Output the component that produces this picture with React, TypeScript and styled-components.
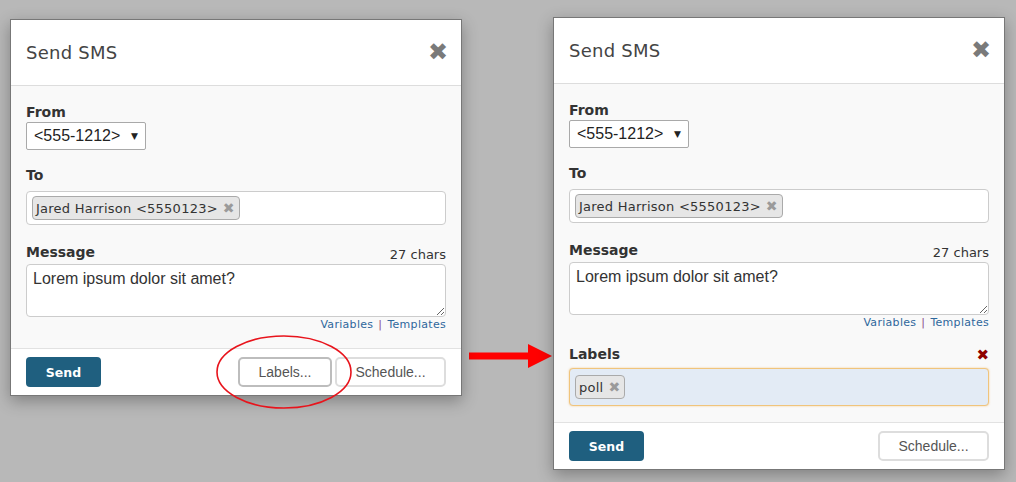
import React from "react";
import styled, { createGlobalStyle } from "styled-components";

const GlobalStyle = createGlobalStyle`
  html, body { margin: 0; padding: 0; }
  body {
    background: #b8b8b8;
    width: 1016px;
    height: 482px;
    overflow: hidden;
    font-family: "DejaVu Sans", Verdana, sans-serif;
  }
`;

const Stage = styled.div`
  display: flex;
  align-items: flex-start;
  padding-left: 10px;
  height: 482px;
  box-sizing: border-box;
`;

const Modal = styled.div<{ $top: number }>`
  position: relative;
  flex-shrink: 0;
  width: 452px;
  box-sizing: border-box;
  margin-top: ${(p) => p.$top}px;
  border: 1px solid #777;
  background: #fff;
  box-shadow: 0 5px 15px rgba(0, 0, 0, 0.3);
  display: flex;
  flex-direction: column;
`;

const Header = styled.div`
  height: 65px;
  display: flex;
  align-items: center;
  justify-content: space-between;
  padding: 0 15px;
  border-bottom: 1px solid #dddddd;
`;

const Title = styled.h4`
  margin: 0;
  font-size: 18px;
  font-weight: normal;
  line-height: 1.1;
  letter-spacing: 0.25px;
  color: #444;
`;

const Close = styled.span`
  font-size: 24px;
  color: #7a7a7a;
  line-height: 1;
  margin-top: -2px;
  margin-right: -2px;
`;

const Body = styled.div`
  background: #f9f9f9;
  padding: 16px 15px 16px;
  display: flex;
  flex-direction: column;
`;

const Section = styled.div<{ $gap: number }>`
  display: flex;
  flex-direction: column;
  margin-top: ${(p) => p.$gap}px;
`;

const LabelRow = styled.div`
  display: flex;
  justify-content: space-between;
  align-items: flex-end;
  height: 20px;
`;

const Label = styled.label`
  font-size: 14px;
  font-weight: bold;
  line-height: 20px;
  color: #333;
`;

const Count = styled.span`
  font-size: 13px;
  line-height: 15px;
  color: #333;
`;

const RemoveLabels = styled.span`
  font-size: 15px;
  color: #8f0000;
  line-height: 16px;
  margin-bottom: 1px;
  margin-right: 0;
`;

const Select = styled.div`
  width: 120px;
  height: 28px;
  box-sizing: border-box;
  border: 1px solid #a9a9a9;
  border-radius: 2px;
  background: #fff;
  display: flex;
  align-items: center;
  justify-content: space-between;
  padding: 0 7px;
  font-family: "Liberation Sans", Arial, sans-serif;
  font-size: 16px;
  color: #222;
`;

const SelectArrow = styled.span`
  font-size: 9px;
  color: #222;
  font-family: "DejaVu Sans", sans-serif;
`;

const TokenBox = styled.div<{ $focused?: boolean }>`
  margin-top: ${(p) => (p.$focused ? 4 : 6)}px;
  box-sizing: border-box;
  height: ${(p) => (p.$focused ? 38 : 34)}px;
  border: 1px solid ${(p) => (p.$focused ? "#f0c47c" : "#cccccc")};
  border-radius: 4px;
  background: ${(p) => (p.$focused ? "#e3ebf5" : "#fff")};
  box-shadow: ${(p) => (p.$focused ? "0 0 2px rgba(240, 180, 90, 0.7)" : "none")};
  padding: 0 5px;
  display: flex;
  align-items: center;
  gap: 4px;
`;

const Chip = styled.span`
  display: inline-flex;
  align-items: center;
  gap: 5px;
  height: 24px;
  box-sizing: border-box;
  padding: 0 4px 0 3px;
  border: 1px solid #aaa;
  border-radius: 4px;
  background: #e6e6e6;
  font-size: 13px;
  letter-spacing: 0.25px;
  color: #333;
`;

const ChipX = styled.span`
  font-size: 14px;
  line-height: 14px;
  color: #9a9a9a;
  letter-spacing: 0;
`;

const MessageArea = styled.textarea`
  display: block;
  margin-top: 2px;
  width: 100%;
  height: 53px;
  box-sizing: border-box;
  border: 1px solid #cccccc;
  border-radius: 4px;
  padding: 5px 6px;
  background: #fff;
  font-family: "Liberation Sans", Arial, sans-serif;
  font-size: 16px;
  color: #333;
  resize: vertical;
  outline: none;
`;

const Links = styled.div`
  margin-top: 1px;
  text-align: right;
  font-size: 11px;
  line-height: 14px;
  letter-spacing: 0.3px;
`;

const Link = styled.a`
  color: #2f679c;
  text-decoration: none;
`;

const Sep = styled.span`
  color: #8a4a8a;
  margin: 0 5px;
`;

const Footer = styled.div`
  border-top: 1px solid #e2e2e2;
  padding: 8px 15px;
  display: flex;
  align-items: center;
  justify-content: space-between;
  background: #fff;
`;

const SendButton = styled.button`
  width: 75px;
  height: 30px;
  border: none;
  border-radius: 4px;
  background: #1f5f7f;
  color: #fff;
  font-family: "DejaVu Sans", Verdana, sans-serif;
  font-weight: bold;
  font-size: 12.5px;
  padding: 0;
`;

const ButtonGroup = styled.div`
  display: flex;
  gap: 3px;
`;

const PlainButton = styled.button<{ $width: number; $strong?: boolean }>`
  width: ${(p) => p.$width}px;
  height: 30px;
  box-sizing: border-box;
  border: 2px solid ${(p) => (p.$strong ? "#bdbdbd" : "#dddddd")};
  border-radius: 5px;
  background: #fff;
  color: #555;
  font-family: "Liberation Sans", Arial, sans-serif;
  font-size: 14px;
  padding: 0;
`;

const Ring = styled.svg`
  position: absolute;
  left: 205px;
  top: 315px;
  width: 136px;
  height: 74px;
  overflow: visible;
  pointer-events: none;
`;

const ArrowWrap = styled.svg`
  flex-shrink: 0;
  width: 83px;
  height: 24px;
  margin: 344px 1px 0 7px;
`;

type DialogProps = { top: number; withLabels?: boolean; annotate?: boolean };

function SmsDialog({ top, withLabels, annotate }: DialogProps) {
  return (
    <Modal $top={top}>
      <Header>
        <Title>Send SMS</Title>
        <Close>✖</Close>
      </Header>
      <Body>
        <Section $gap={0}>
          <LabelRow>
            <Label>From</Label>
          </LabelRow>
          <Select>
            <span>&lt;555-1212&gt;</span>
            <SelectArrow>▼</SelectArrow>
          </Select>
        </Section>
        <Section $gap={15}>
          <LabelRow>
            <Label>To</Label>
          </LabelRow>
          <TokenBox>
            <Chip>
              Jared Harrison &lt;5550123&gt;
              <ChipX>✖</ChipX>
            </Chip>
          </TokenBox>
        </Section>
        <Section $gap={17}>
          <LabelRow>
            <Label>Message</Label>
            <Count>27 chars</Count>
          </LabelRow>
          <MessageArea defaultValue="Lorem ipsum dolor sit amet?" />
          <Links>
            <Link href="#">Variables</Link>
            <Sep>|</Sep>
            <Link href="#">Templates</Link>
          </Links>
        </Section>
        {withLabels && (
          <Section $gap={14}>
            <LabelRow>
              <Label>Labels</Label>
              <RemoveLabels>✖</RemoveLabels>
            </LabelRow>
            <TokenBox $focused>
              <Chip>
                poll
                <ChipX>✖</ChipX>
              </Chip>
            </TokenBox>
          </Section>
        )}
      </Body>
      <Footer>
        <SendButton>Send</SendButton>
        <ButtonGroup>
          {!withLabels && (
            <PlainButton $width={94} $strong>
              Labels...
            </PlainButton>
          )}
          <PlainButton $width={111}>Schedule...</PlainButton>
        </ButtonGroup>
      </Footer>
      {annotate && (
        <Ring viewBox="0 0 136 74">
          <ellipse cx="68" cy="37" rx="67" ry="36" fill="none" stroke="#e8141c" strokeWidth="1.6" />
        </Ring>
      )}
    </Modal>
  );
}

export default function App() {
  return (
    <>
      <GlobalStyle />
      <Stage>
        <SmsDialog top={19} annotate />
        <ArrowWrap viewBox="0 0 83 24">
          <rect x="0" y="8.5" width="60" height="7" fill="#ff0000" />
          <polygon points="59,0 83,12 59,24" fill="#ff0000" />
        </ArrowWrap>
        <SmsDialog top={17} withLabels />
      </Stage>
    </>
  );
}
